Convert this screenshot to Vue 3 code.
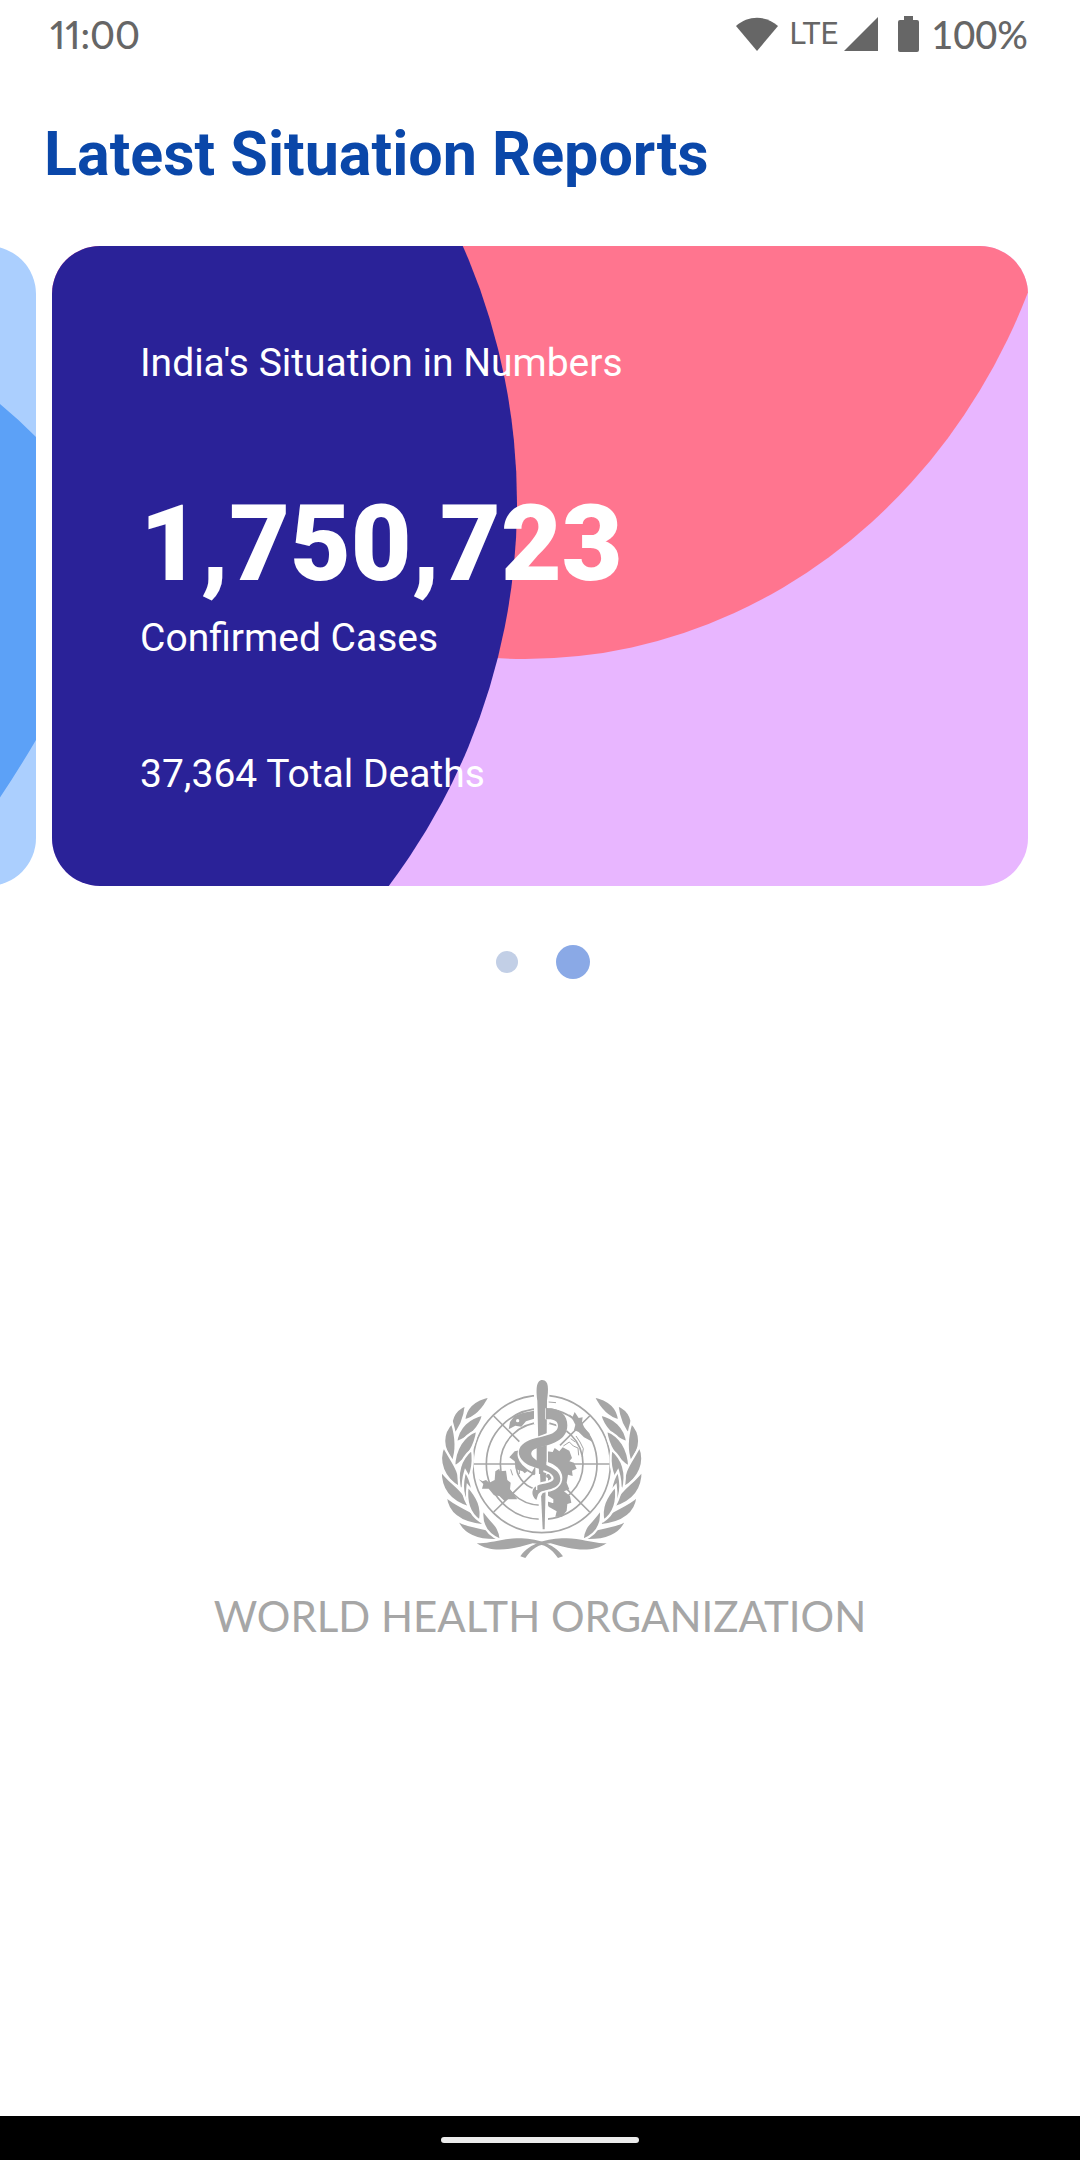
<script setup>
import { ref } from 'vue'

const active = ref(1)
const slides = ['Global situation', "India's situation"]

const leaves = [
  'M162 66C124 74 88 96 84 140C118 132 144 104 162 66Z',
  'M90 93C52 108 38 142 48 190C76 162 86 132 90 93Z',
  'M142 121C100 130 66 158 60 206C102 190 132 160 142 121Z',
  'M48 146C16 178 16 222 50 264C66 224 60 186 48 146Z',
  'M124 169C82 184 56 224 54 280C94 254 118 216 124 169Z',
  'M23 217C2 264 24 314 70 340C76 290 46 262 23 217Z',
  'M108 226C74 254 60 296 73 349C104 316 116 274 108 226Z',
  'M14 288C12 348 46 384 98 400C92 348 46 334 14 288Z',
  'M88 291C74 336 82 374 102 401C116 362 110 326 88 291Z',
  'M29 366C34 424 84 448 142 454C128 406 72 408 29 366Z',
  'M95 335C88 386 100 420 132 441C140 400 126 370 95 335Z',
  'M62 438C82 490 140 502 197 498C172 452 112 470 62 438Z',
  'M140 405C132 454 154 482 195 499C192 450 162 444 140 405Z',
]
const ribbon =
  'M122 507C156 511 200 492 246 493C300 494 352 506 381 547L366 552C346 524 328 511 290 508C226 528 164 538 122 507Z'
</script>

<template>
  <div class="screen">
    <header class="status">
      <span class="digits time">11:00</span>
      <div class="indicators">
        <svg class="wifi" viewBox="0 0 42 36" aria-label="Wi-Fi">
          <path d="M0 10C12-1 30-1 42 10L21 35Z" />
        </svg>
        <span class="network">LTE</span>
        <svg class="signal" viewBox="0 0 34 34" aria-label="Signal">
          <path d="M34 0V34H0Z" />
        </svg>
        <svg class="battery" viewBox="0 0 21 36" aria-label="Battery">
          <path d="M6 0H15V4H19Q21 4 21 6V34Q21 36 19 36H2Q0 36 0 34V6Q0 4 2 4H6Z" />
        </svg>
        <span class="digits">100%</span>
      </div>
    </header>

    <main>
      <h1>Latest Situation Reports</h1>

      <section class="carousel" aria-label="Situation reports">
        <article class="card previous" aria-hidden="true">
          <svg class="backdrop" viewBox="0 0 976 640" preserveAspectRatio="none">
            <rect width="976" height="640" fill="#abcffe" />
            <path
              d="M900 128Q944 158 976 191C1050 280 1040 390 976 494Q942 552 900 608C760 700 560 600 560 380C560 160 740 40 900 128Z"
              fill="#5ca1f7"
            />
          </svg>
        </article>
        <article class="card">
          <svg class="backdrop" viewBox="0 0 976 640" preserveAspectRatio="none">
            <rect width="976" height="640" fill="#e8b6ff" />
            <ellipse cx="473" cy="-191" rx="547" ry="604" fill="#ff758f" />
            <circle cx="-171" cy="257" r="636" fill="#2a2298" />
          </svg>
          <h2>India's Situation in Numbers</h2>
          <p class="count">1,750,723</p>
          <p class="label">Confirmed Cases</p>
          <p class="deaths">37,364 Total Deaths</p>
        </article>
      </section>

      <nav class="dots" aria-label="Report pages">
        <button
          v-for="(slide, i) in slides"
          :key="slide"
          type="button"
          :class="['dot', { active: i === active }]"
          :aria-label="slide"
          @click="active = i"
        ></button>
      </nav>

      <footer class="brand">
        <svg class="emblem" viewBox="-6 0 636 570" aria-hidden="true">
          <g fill="none" stroke="#a6a6a6" stroke-width="5">
            <circle cx="317" cy="270" r="206" />
            <circle cx="317" cy="270" r="166" />
            <circle cx="317" cy="270" r="124" />
            <path d="M240 270A78 78 0 0 0 296 345" />
            <path d="M111 270H245M400 270H523M173 126L250 203M173 414L300 290M461 126L372 214M461 414L385 338" />
          </g>
          <path d="M294 54H340V150H294Z" fill="#fff" />
          <g fill="#a6a6a6">
            <path d="M294 110L294 134L270 142L256 158L238 155L218 166L222 144L235 126L262 116Z" />
            <path d="M128 316L140 322L150 318L160 326L176 318L178 292L190 284L192 292L210 290L214 318L224 326L222 346L244 376L214 376L206 382L190 366L174 364L158 344L138 344L142 330Z" />
            <path d="M220 250L236 232L254 228L284 262L304 268L304 296L294 304L274 292L266 298L260 292L240 286L236 262Z" />
            <path d="M399 120L410 128L416 114L428 132L440 130L438 144L446 164L460 178L469 203L444 190L428 174L414 168L418 152L412 140Z" />
            <path d="M332 232L350 234L356 222L370 232L380 220L400 230L408 252L400 262L414 266L422 284L408 290L410 306L396 302L392 326L400 346L384 352L402 366L406 386L394 390L392 410L378 428L358 428L362 412L338 398L332 382L352 388L352 376L332 362Z" />
          </g>
          <g fill="none" stroke="#a6a6a6" stroke-width="3">
            <path d="M382 216L400 204L412 216L426 222L428 244M420 186L432 204L442 224L438 248M404 194L418 204M338 84L360 86M224 286L230 304M250 288V300" />
          </g>
          <circle cx="245" cy="140" r="5" fill="#fff" />
          <path d="M298 54V340H308V466H336V54Z" fill="#fff" />
          <path d="M304 80C300 48 300 18 319 18C339 18 338 46 333 80L331 300H309Z" fill="#a6a6a6" />
          <path d="M312 296H330L326 466H320Z" fill="#a6a6a6" />
          <g fill="none" stroke="#fff" stroke-width="33">
            <path d="M328 119C358 119 378 132 378 156C376 194 316 196 286 212C246 234 258 258 296 280" />
            <path d="M326 278C374 292 374 332 330 338C304 342 300 354 301 366" />
          </g>
          <path
            d="M330 102C374 102 394 124 394 154C394 202 342 212 304 222C276 232 284 248 304 260C336 278 372 284 373 314C373 344 334 346 318 352C304 358 306 366 301 378C284 364 284 340 310 332C336 326 358 324 352 308C340 284 290 286 264 264C242 244 244 220 266 206C300 184 364 190 366 156C366 140 352 134 330 136Z"
            fill="#a6a6a6"
          />
          <path d="M302 220L331 216V282L318 290L302 276Z" fill="#a6a6a6" />
          <path d="M302 286V348" fill="none" stroke="#fff" stroke-width="4" />
          <circle cx="336" cy="306" r="6" fill="#a6a6a6" />
          <g
            v-for="side in ['left', 'right']"
            :key="side"
            fill="#a6a6a6"
            :transform="side === 'right' ? 'translate(634 0) scale(-1 1)' : undefined"
          >
            <path v-for="leaf in leaves" :key="leaf" :d="leaf" stroke="#fff" stroke-width="7" />
            <path :d="ribbon" />
          </g>
        </svg>
        <p>WORLD HEALTH ORGANIZATION</p>
      </footer>
    </main>

    <div class="system-bar"><span class="handle"></span></div>
  </div>
</template>

<style>
body {
  margin: 0;
  background: #fff;
}
</style>

<style scoped>
.screen {
  display: flex;
  flex-direction: column;
  min-height: 100vh;
  overflow: hidden;
  font-family: Roboto, "Liberation Sans", sans-serif;
}

h1,
h2,
p {
  margin: 0;
}

.status {
  display: flex;
  justify-content: space-between;
  align-items: center;
  height: 68px;
  padding: 0 52px 0 50px;
  color: #666;
  fill: #666;
}

.indicators {
  display: flex;
  align-items: center;
}

.digits {
  font-family: Lato, sans-serif;
  font-size: 38px;
  font-weight: 500;
  line-height: 68px;
}

.time {
  font-variant-numeric: proportional-nums;
}

.network {
  margin: 0 6px 0 12px;
  font-size: 31px;
  line-height: 66px;
}

.wifi {
  width: 42px;
  height: 36px;
}

.signal {
  width: 34px;
  height: 34px;
}

.battery {
  width: 21px;
  height: 36px;
  margin: 0 12px 0 20px;
}

main {
  flex: 1;
}

h1 {
  padding: 50px 44px 0;
  color: #0a47a9;
  font-size: 61px;
  font-weight: 700;
  line-height: 72px;
}

.carousel {
  display: flex;
  justify-content: flex-end;
  gap: 16px;
  margin-top: 56px;
  padding: 0 52px;
}

.card {
  position: relative;
  flex: 0 0 100%;
  box-sizing: border-box;
  min-height: 640px;
  padding: 93px 88px 80px;
  overflow: hidden;
  border-radius: 48px;
  color: #fff;
}

.backdrop {
  position: absolute;
  inset: 0;
  width: 100%;
  height: 100%;
}

.card h2,
.card p {
  position: relative;
  font-size: 39px;
  font-weight: 400;
  line-height: 48px;
}

.card .count {
  margin-top: 98px;
  font-size: 105px;
  font-weight: 900;
  line-height: 120px;
}

.card .label {
  margin-top: 9px;
}

.card .deaths {
  margin-top: 88px;
}

.dots {
  display: flex;
  justify-content: center;
  align-items: center;
  gap: 38px;
  height: 34px;
  margin-top: 59px;
  padding-left: 6px;
}

.dot {
  width: 22px;
  height: 22px;
  padding: 0;
  border: 0;
  border-radius: 50%;
  background: #c2cfe6;
}

.dot.active {
  width: 34px;
  height: 34px;
  background: #8aa9e6;
}

.brand {
  display: flex;
  flex-direction: column;
  align-items: center;
  margin-top: 395px;
}

.emblem {
  width: 212px;
  height: 190px;
}

.brand p {
  margin-top: 26px;
  color: #a6a6a6;
  font-family: Lato, sans-serif;
  font-size: 42px;
  line-height: 52px;
}

.system-bar {
  display: flex;
  justify-content: center;
  align-items: center;
  height: 44px;
  padding-top: 4px;
  box-sizing: border-box;
  background: #000;
}

.handle {
  width: 198px;
  height: 6px;
  border-radius: 3px;
  background: #ebebeb;
}
</style>
